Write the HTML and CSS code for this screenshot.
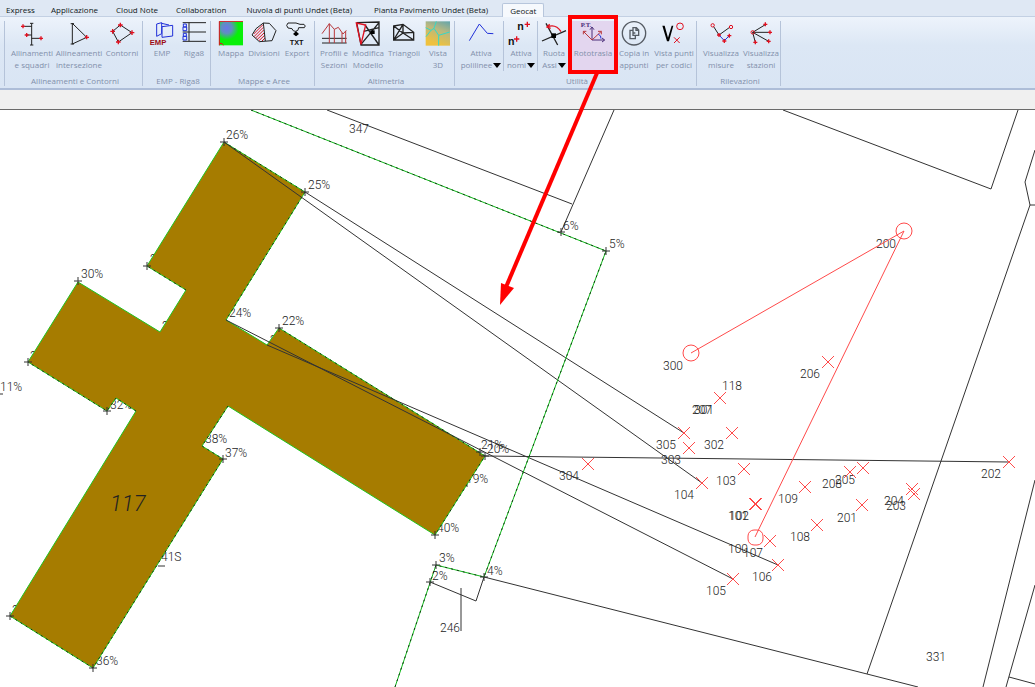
FILE: index.html
```html
<!DOCTYPE html>
<html lang="it">
<head>
<meta charset="utf-8">
<title>Geocat</title>
<link rel="stylesheet" href="styles.css">
</head>
<body>
<nav class="tabs">
  <button class="tab">Express</button>
  <button class="tab">Applicazione</button>
  <button class="tab">Cloud Note</button>
  <button class="tab">Collaboration</button>
  <button class="tab wide">Nuvola di punti Undet (Beta)</button>
  <button class="tab wide">Pianta Pavimento Undet (Beta)</button>
  <button class="tab active">Geocat</button>
</nav>
<header class="ribbon">
  <section class="group edge"></section>
  <section class="group">
    <div class="tools">
      <button class="tool w48"><svg class="icon" viewBox="0 0 78 78"><path class="k" d="M38 7V72M33 7h10M33 72h10M12 16h26M22 42h16M38 52h28"/><path class="r3" d="M6 16h12M12 10v12M17 42h12M23 36v12M60 52h12M66 46v12"/></svg><span>Allinamenti<br>e squadri</span></button>
      <button class="tool w46"><svg class="icon" viewBox="0 0 78 78"><path class="k" d="M19 7L62 49L19 69ZM14 8h10M14 69h10"/><path class="r3" d="M56 49h13M62 42v13"/></svg><span>Allineamenti<br>intersezione</span></button>
      <button class="tool w40"><svg class="icon" viewBox="0 0 78 78"><path class="k" d="M34 12L69 35L28 63L11 31Z"/><path class="r3" d="M27 12h14M34 5v14M62 35h14M69 28v14M21 63h14M28 56v14M4 31h14M11 24v14"/></svg><span>Contorni</span></button>
    </div>
    <h2>Allineamenti e Contorni</h2>
  </section>
  <section class="group">
    <div class="tools">
      <button class="tool w32"><svg class="icon" viewBox="0 0 78 78"><path class="b3" d="M23 9L38 5V38L23 46ZM38 7L60 12M39 17L71 13V45L39 49Z"/><text class="emp" x="2" y="72">EMP</text></svg><span>EMP</span></button>
      <button class="tool w32"><svg class="icon" viewBox="0 0 78 78"><path class="k" d="M5 5H75M5 33H75M5 61H75M24 5V61"/><path class="b3" d="M7 9h9v9H7zM6 18h11v11H6zM7 37h9v9H7zM6 46h11v11H6z"/></svg><span>Riga8</span></button>
    </div>
    <h2>EMP - Riga8</h2>
  </section>
  <section class="group">
    <div class="tools">
      <button class="tool w34"><svg class="icon" viewBox="0 0 78 78"><defs><radialGradient id="lake" cx=".32" cy=".28" r=".5"><stop offset="0" stop-color="#6b78e8"/><stop offset=".45" stop-color="#5f8fc0"/><stop offset="1" stop-color="#08f008"/></radialGradient></defs><path fill="url(#lake)" d="M3 1h72v72H3z"/><path class="r" d="M75 1H4V73M4 67q10-2 12 6"/></svg><span>Mappa</span></button>
      <button class="tool w32"><svg class="icon" viewBox="0 0 78 78"><path class="r" d="M8 39L36 11M9 47L37 19M14 51L38 27M18 56L39 36M24 59L41 43M33 60L42 51"/><path class="k" d="M15 23L37 6L55 7L75 29L63 59L25 62L3 42ZM37 6L43 60"/></svg><span>Divisioni</span></button>
      <button class="tool w34"><svg class="icon" viewBox="0 0 78 78"><path class="k" d="M12 6H36L48 10H60Q67 15 61 20H44Q44 31 34 31Q26 31 24 23L12 21Q4 13 12 6ZM36 31V44"/><path d="M36 31L45 39L36 46L27 39Z"/><text class="txt" x="17" y="73">TXT</text></svg><span>Export</span></button>
    </div>
    <h2>Mappe e Aree</h2>
  </section>
  <section class="group">
    <div class="tools">
      <button class="tool w32"><svg class="icon" viewBox="0 0 78 78"><path class="k" d="M3 52H77M3 66H77"/><path class="dr" d="M3 38L25 8L40 25L52 19L66 39L76 28M25 8V66M40 25V66M63 35V66M74 30V66"/></svg><span>Profili e<br>Sezioni</span></button>
      <button class="tool w36"><svg class="icon" viewBox="0 0 78 78"><path class="k4" d="M5 5L72 3V72H18L5 5M30 12L72 72M18 70L72 5M26 31L72 20"/><path d="M46 28h13v11H46z"/><path class="r4" d="M4 6L32 12L18 70Z"/></svg><span>Modifica<br>Modello</span></button>
      <button class="tool w36"><svg class="icon" viewBox="0 0 78 78"><path class="k4" d="M8 15L36 10L68 34V57H8ZM8 57L36 10M8 15L36 36L68 34M8 57L36 36L68 57M36 10V36"/></svg><span>Triangoli</span></button>
      <button class="tool w32"><svg class="icon" viewBox="0 0 78 78"><defs><linearGradient id="sand" x1="1" y1="0" x2=".6" y2="1"><stop offset="0" stop-color="#61a5ad"/><stop offset=".45" stop-color="#b8b880"/><stop offset="1" stop-color="#efc13d"/></linearGradient></defs><path fill="url(#sand)" d="M2 1h73v73H2z"/><path class="cy" d="M2 20L18 28L27 22L41 43L74 33M27 22L34 1M18 28L3 47M41 43V74"/></svg><span>Vista<br>3D</span></button>
    </div>
    <h2>Altimetria</h2>
  </section>
  <section class="group">
    <div class="tools">
      <button class="tool w46"><svg class="icon" viewBox="0 0 78 78"><path class="b3" d="M4 59L34 9L58 37L76 38"/></svg><span>Attiva<br>polilinee<i class="caret"></i></span></button>
      <button class="tool w34 split"><svg class="icon" viewBox="0 0 78 78"><text class="n" x="28" y="26">n</text><text class="n" x="0" y="72">n</text><path class="r4" d="M50 10h16M58 2v16M18 54h16M26 46v16"/></svg><span>Attiva<br>nomi<i class="caret"></i></span></button>
      <button class="tool w32 split"><svg class="icon" viewBox="0 0 78 78"><path class="k4" d="M3 60L75 29M15 7L50 72"/><path class="r4" d="M20 17Q45 8 60 32M26 10L18 18L29 22"/><path d="M31 37h14v14H31z"/></svg><span>Ruota<br>Assi<i class="caret"></i></span></button>
      <button class="tool w46 hot"><svg class="icon" viewBox="0 0 78 78"><text class="rt" x="2" y="18">P.T.</text><path class="pu" d="M36 57V20M30 26L36 18L42 26M36 57H73M66 51L74 57L66 63"/><path class="dr" d="M36 57L10 31M10 40V31H19M36 57L64 31M54 31H64V40"/><path class="b3" d="M55 40Q64 43 63 53"/></svg><span>Rototrasla</span></button>
      <button class="tool w36"><svg class="icon" viewBox="0 0 78 78"><g fill="none" stroke="#555b63" stroke-width="4"><circle cx="39" cy="37" r="35"/><path d="M36 20H46L53 27V43H36ZM45 20V28H53M36 28H27V53H43V43M36 28V36H43"/></g></svg><span>Copia in<br>appunti</span></button>
      <button class="tool w44"><svg class="icon" viewBox="0 0 78 78"><path d="M4 14H11L21 50L32 14H37L24 61H18Z"/><circle class="r" cx="57" cy="16" r="10"/><path class="r" d="M39 49L56 66M56 49L39 66"/></svg><span>Vista punti<br>per codici</span></button>
    </div>
    <h2>Utilità</h2>
  </section>
  <section class="group">
    <div class="tools">
      <button class="tool w42"><svg class="icon" viewBox="0 0 78 78"><path class="k" d="M17 17L33 42L65 19"/><path class="b3" d="M33 42L49 59L64 44"/><circle class="r" cx="14" cy="13" r="5"/><circle class="r" cx="69" cy="18" r="5"/><path class="r3" d="M27 42h12M33 36v12M43 60h12M49 54v12M58 44h12M64 38v12"/></svg><span>Visualizza<br>misure</span></button>
      <button class="tool w38"><svg class="icon" viewBox="0 0 78 78"><path class="k" d="M14 34L52 11M14 34H66M14 34L62 61M14 34L22 64"/><circle class="r" cx="14" cy="34" r="5"/><path class="r3" d="M46 10h12M52 4v12M60 34h12M66 28v12M56 61h12M62 55v12M16 64h12M22 58v12"/></svg><span>Visualizza<br>stazioni</span></button>
    </div>
    <h2>Rilevazioni</h2>
  </section>
</header>
<div class="strip"></div>
<main class="drawing">
<svg class="plan" viewBox="0 110 1035 577" preserveAspectRatio="xMinYMin slice">
  <defs>
    <path id="x" class="mark" d="M-6 -6L6 6M6 -6L-6 6"/>
    <path id="p" class="line" d="M-4 0H4M0 -4V4"/>
  </defs>
  <g class="txtlayer">
    <text x="226" y="139">26%</text><text x="308" y="189">25%</text><text x="81" y="278">30%</text>
    <text x="229" y="317">24%</text><text x="282" y="325">22%</text><text x="150" y="263">27%</text>
    <text x="162" y="330">29%</text><text x="30" y="360">31%</text><text x="12" y="614">35%</text>
    <text x="270" y="344">23%</text><text x="0" y="391">11%</text><text x="110" y="409">32%</text>
    <text x="205" y="443">38%</text><text x="225" y="457">37%</text><text x="161" y="561">41S</text>
    <text x="96" y="665">36%</text><text x="466" y="483">19%</text><text x="437" y="532">40%</text>
  </g>
  <path class="line" d="M158 566h7M0 394h3M461 486h7"/>
  <path class="house" d="M224 142L305 192L226 320L267 345L279 328L485 456L435 535L228 406L202 446L223 459L93 668L10 616L136 411L116 398L107 411L28 362L78 282L160 332L186 290L147 266Z"/>
  <path class="dots" d="M305 192L226 320M279 328L485 456L435 535M228 406L202 446L223 459L93 668L10 616M136 411L116 398L107 411L28 362M186 290L147 266M224 142L305 192"/>
  <text class="big" x="110" y="511">117</text>

  <path class="line" d="M224 142L702 483M305 192L684 433M226 320L733 579M267 345L778 565M485 456L1009 462"/>
  <path class="line" d="M327 110L572 204M614 110L561 232M783 110L991 189L1018 110M1035 150L1025 182L1030 205H1035M1030 205L867 674M1035 480L983 687M1035 585L1006 687M1009 677L1035 684M430 582L476 601L484 577L867 674L918 687M461 588V631"/>
  <path class="bound" d="M251 110L606 251L484 577L436 565L395 687"/>
  <path class="dots" d="M251 110L606 251L484 577L436 565L395 687"/>

  <use href="#p" x="224" y="142"/><use href="#p" x="305" y="192"/><use href="#p" x="147" y="266"/><use href="#p" x="78" y="281"/><use href="#p" x="28" y="362"/><use href="#p" x="107" y="411"/><use href="#p" x="223" y="459"/><use href="#p" x="10" y="616"/><use href="#p" x="93" y="668"/><use href="#p" x="435" y="535"/><use href="#p" x="279" y="328"/><use href="#p" x="561" y="232"/><use href="#p" x="606" y="251"/><use href="#p" x="484" y="577"/><use href="#p" x="436" y="565"/><use href="#p" x="430" y="582"/><use href="#p" x="485" y="456"/><use href="#p" x="480" y="452"/>

  <g class="txtlayer">
    <text x="481" y="449">21%</text><text x="487" y="453">20%</text>
    <text x="439" y="562">3%</text><text x="432" y="580">2%</text><text x="487" y="575">4%</text>
    <text x="563" y="230">6%</text><text x="609" y="248">5%</text><text x="440" y="632">246</text>
    <text x="349" y="133">347</text><text x="656" y="449">305</text><text x="661" y="464">303</text>
    <text x="559" y="480">304</text><text x="674" y="499">104</text><text x="704" y="449">302</text>
    <text x="716" y="485">103</text><text x="728" y="520">101</text><text x="729" y="520">102</text>
    <text x="692" y="414">207</text><text x="694" y="414">301</text><text x="800" y="378">206</text>
    <text x="722" y="390">118</text><text x="663" y="370">300</text><text x="876" y="248">200</text>
    <text x="835" y="484">205</text><text x="822" y="488">208</text><text x="778" y="503">109</text>
    <text x="837" y="522">201</text><text x="884" y="505">204</text><text x="886" y="510">203</text>
    <text x="981" y="478">202</text><text x="790" y="541">108</text><text x="743" y="557">107</text>
    <text x="728" y="553">100</text><text x="752" y="581">106</text><text x="706" y="595">105</text>
    <text x="926" y="661">331</text>
  </g>

  <path class="mark" d="M691 353L904 231L755 537"/>
  <circle class="mark" cx="904" cy="231" r="8"/><circle class="mark" cx="691" cy="353" r="8"/><rect class="mark" x="748" y="530" width="15" height="15" rx="6"/>
  <use href="#x" x="684" y="433"/><use href="#x" x="732" y="433"/><use href="#x" x="689" y="448"/><use href="#x" x="744" y="469"/><use href="#x" x="702" y="483"/><use href="#x" x="755" y="504"/><use href="#x" x="756" y="504"/><use href="#x" x="805" y="487"/><use href="#x" x="850" y="472"/><use href="#x" x="863" y="468"/><use href="#x" x="862" y="505"/><use href="#x" x="912" y="489"/><use href="#x" x="914" y="494"/><use href="#x" x="1009" y="462"/><use href="#x" x="817" y="525"/><use href="#x" x="770" y="541"/><use href="#x" x="778" y="565"/><use href="#x" x="733" y="579"/><use href="#x" x="588" y="464"/><use href="#x" x="720" y="398"/><use href="#x" x="828" y="362"/>
</svg>
</main>
<svg class="callout" width="630" height="310" viewBox="0 0 630 310">
  <rect x="570" y="17" width="46" height="55" fill="none" stroke="#f00" stroke-width="4"/>
  <path d="M597 73L506 287" stroke="#f00" stroke-width="4"/>
  <path d="M500 305L501 283L514 288Z" fill="#f00"/>
</svg>
</body>
</html>
```
FILE: styles.css
```css
* { box-sizing: border-box; }

body {
  margin: 0;
  height: 100vh;
  display: flex;
  flex-direction: column;
  overflow: hidden;
  position: relative;
  background: #fff;
  font-family: "Open Sans", "Noto Sans", sans-serif;
  font-size: 8px;
  line-height: 12px;
}

button {
  border: 0;
  margin: 0;
  padding: 0;
  background: none;
  font: inherit;
  color: inherit;
  white-space: nowrap;
}

/* Tab strip */
.tabs {
  display: flex;
  align-items: flex-end;
  height: 17px;
  flex: none;
  background: #dfe8f4;
  border-bottom: 1px solid #c3d0e3;
}
.tab {
  height: 12px;
  padding: 0 9px;
  color: #111820;
}
.tab:first-child { padding: 0 7px 0 6px; }
.tab.wide { padding: 0 11px; }
.tab.active {
  height: 14px;
  margin-left: 3px;
  margin-bottom: -1px;
  padding: 0 7px;
  background: #f6f9fd;
  border: 1px solid #b7c6dc;
  border-bottom: 0;
  border-radius: 2px 2px 0 0;
}

/* Ribbon */
.ribbon {
  display: flex;
  flex: none;
  height: 73px;
  padding-top: 4px;
  background: linear-gradient(#edf3fb, #dce7f5 40%, #d9e5f4);
  border-bottom: 2px solid #adbdd8;
  color: #8290ab;
}
.group {
  display: flex;
  flex-direction: column;
  flex: none;
  height: 65px;
  padding-left: 3px;
  border-right: 1px solid #b5c3d9;
}
.group.edge { width: 5px; }
.group h2 {
  margin: auto 0 0;
  font-size: 8px;
  font-weight: 400;
  line-height: 10px;
  text-align: center;
}
.tools { display: flex; }
.tool {
  display: flex;
  flex-direction: column;
  align-items: center;
  height: 50px;
  text-align: center;
}
.icon {
  display: block;
  flex: none;
  width: 26px;
  height: 26px;
}
.w32 { width: 32px; }
.w34 { width: 34px; }
.w36 { width: 36px; }
.w38 { width: 38px; }
.w40 { width: 40px; }
.w42 { width: 42px; }
.w44 { width: 44px; }
.w46 { width: 46px; }
.w48 { width: 48px; }
.split { box-shadow: -1px 0 #b5c3d9; }
.hot { background: #e3d6ef; }
.caret {
  display: inline-block;
  margin-left: 1px;
  border: 4px solid transparent;
  border-top: 5px solid #000;
  border-bottom: 0;
}

/* Icon strokes */
.k, .k4, .r, .r3, .r4, .b3, .dr, .cy, .pu { fill: none; stroke-width: 3; }
.k, .k4 { stroke: #222; }
.r, .r3, .r4 { stroke: #e01020; }
.k4, .r4, .r3 { stroke-width: 4; }
.b3 { stroke: #2030d8; }
.dr { stroke: #b8383c; }
.cy { stroke: #35d8c8; }
.pu { stroke: #4a2d78; }
.icon text { font-family: "Liberation Sans", sans-serif; font-weight: 700; }
.emp { font-size: 23px; fill: #9c0c14; }
.txt { font-size: 22px; fill: #111; }
.n { font-size: 32px; fill: #111; }
.icon .rt { font-family: "Liberation Serif", serif; font-size: 20px; fill: #4a2d78; }

.strip {
  flex: none;
  height: 20px;
  background: #f0f0f0;
  border-bottom: 1px solid #6a6a6a;
}

/* Survey plan */
.drawing { flex: 1; min-height: 0; }
.plan { display: block; width: 100%; height: 100%; }
.line { fill: none; stroke: #333; stroke-width: 1; }
.house { fill: #a67c00; stroke: #1fc41f; stroke-width: 1; }
.bound { fill: none; stroke: #0fb81a; stroke-width: 1; }
.dots { fill: none; stroke: #123812; stroke-width: 1; stroke-dasharray: 2 4; }
.mark { fill: none; stroke: #ff4a4a; stroke-width: 1; }
.txtlayer { font-family: Roboto, sans-serif; font-size: 12px; font-weight: 300; fill: #222; }
.big { font-family: Roboto, sans-serif; font-size: 22px; font-weight: 300; font-style: italic; fill: #222; }

.callout {
  position: absolute;
  left: 0;
  top: 0;
  pointer-events: none;
}
```
